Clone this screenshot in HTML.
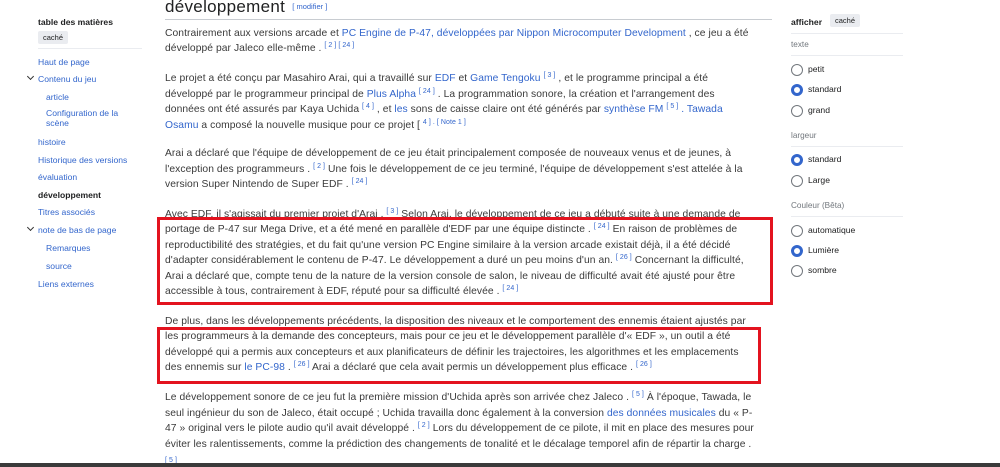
<!DOCTYPE html>
<html><head><meta charset="utf-8"><style>
*{margin:0;padding:0;box-sizing:border-box}
body{width:1000px;height:467px;overflow:hidden;background:#fff;font-family:"Liberation Sans","Noto Sans CJK JP",sans-serif;color:#202122;position:relative}
.l{position:absolute;left:165px;white-space:nowrap;font-size:10.3px;line-height:15px;color:#3a3a3a;letter-spacing:0.06px}
a{color:#3366cc;text-decoration:none}
sup{font-size:7px;color:#3366cc;vertical-align:4px;line-height:0}
.s{position:absolute;font-size:8.6px;line-height:12px;white-space:nowrap;color:#3366cc}
.b{font-weight:bold;color:#202122}
.badge{position:absolute;background:#eaecf0;color:#202122;font-size:7.5px;padding:2px 5px;border-radius:2px}
.r{position:absolute;left:791px;width:12px;height:12px;border:1px solid #72777d;border-radius:50%}
.r.on{border:3.5px solid #36c}
.rt{position:absolute;left:808px;font-size:8.6px;color:#202122;white-space:nowrap}
.g{position:absolute;left:791px;font-size:8.2px;color:#72777d}
.hr{position:absolute;left:791px;width:112px;height:1px;background:#eaecf0}
.box{position:absolute;border:3px solid #e3131f}
.chev{position:absolute;left:28px;width:5px;height:5px;border-right:1px solid #333;border-bottom:1px solid #333;transform:rotate(45deg)}
</style></head><body>

<div class="s b" style="left:38px;top:16px">table des matières</div>
<div class="badge" style="left:38px;top:31px">caché</div>
<div style="position:absolute;left:38px;top:48px;width:104px;height:1px;background:#eaecf0"></div>
<div class="s" style="left:38px;top:56px">Haut de page</div>
<div class="chev" style="top:74px"></div>
<div class="s" style="left:38px;top:73px">Contenu du jeu</div>
<div class="s" style="left:46px;top:91px">article</div>
<div class="s" style="left:46px;top:108px;line-height:10px">Configuration de la<br>scène</div>
<div class="s" style="left:38px;top:136px">histoire</div>
<div class="s" style="left:38px;top:154px">Historique des versions</div>
<div class="s" style="left:38px;top:171px">évaluation</div>
<div class="s b" style="left:38px;top:189px">développement</div>
<div class="s" style="left:38px;top:206px">Titres associés</div>
<div class="chev" style="top:225px"></div>
<div class="s" style="left:38px;top:224px">note de bas de page</div>
<div class="s" style="left:46px;top:242px">Remarques</div>
<div class="s" style="left:46px;top:260px">source</div>
<div class="s" style="left:38px;top:278px">Liens externes</div>

<div style="position:absolute;left:165px;top:-3px;font-size:17px;color:#202122;white-space:nowrap;letter-spacing:0.3px">développement <span style="font-size:7.5px;color:#3366cc;vertical-align:3px;letter-spacing:0">&nbsp;[ <a>modifier</a> ]</span></div>
<div style="position:absolute;left:165px;top:19px;width:607px;height:1px;background:#c8ccd1"></div>

<div class="l" style="top:26px">Contrairement aux versions arcade et <a>PC Engine de P-47, développées par Nippon Microcomputer Development</a> , ce jeu a été</div>
<div class="l" style="top:41px">développé par Jaleco elle-même . <sup>[ 2 ] [ 24 ]</sup></div>

<div class="l" style="top:71px">Le projet a été conçu par Masahiro Arai, qui a travaillé sur <a>EDF</a> et <a>Game Tengoku</a> <sup>[ 3 ]</sup> , et le programme principal a été</div>
<div class="l" style="top:87px">développé par le programmeur principal de <a>Plus Alpha</a> <sup>[ 24 ]</sup> . La programmation sonore, la création et l'arrangement des</div>
<div class="l" style="top:102px">données ont été assurés par Kaya Uchida <sup>[ 4 ]</sup> , et <a>les</a> sons de caisse claire ont été générés par <a>synthèse FM</a> <sup>[ 5 ]</sup> <a>. Tawada</a></div>
<div class="l" style="top:118px"><a>Osamu</a> a composé la nouvelle musique pour ce projet [ <sup>4 ] . [ Note 1 ]</sup></div>

<div class="l" style="top:146px">Arai a déclaré que l'équipe de développement de ce jeu était principalement composée de nouveaux venus et de jeunes, à</div>
<div class="l" style="top:162px">l'exception des programmeurs . <sup>[ 2 ]</sup> Une fois le développement de ce jeu terminé, l'équipe de développement s'est attelée à la</div>
<div class="l" style="top:177px">version Super Nintendo de Super EDF . <sup>[ 24 ]</sup></div>

<div class="l" style="top:207px">Avec EDF, il s'agissait du premier projet d'Arai . <sup>[ 3 ]</sup> Selon Arai, le développement de ce jeu a débuté suite à une demande de</div>
<div class="l" style="top:222px">portage de P-47 sur Mega Drive, et a été mené en parallèle d'EDF par une équipe distincte . <sup>[ 24 ]</sup> En raison de problèmes de</div>
<div class="l" style="top:238px">reproductibilité des stratégies, et du fait qu'une version PC Engine similaire à la version arcade existait déjà, il a été décidé</div>
<div class="l" style="top:253px">d'adapter considérablement le contenu de P-47. Le développement a duré un peu moins d'un an. <sup>[ 26 ]</sup> Concernant la difficulté,</div>
<div class="l" style="top:269px">Arai a déclaré que, compte tenu de la nature de la version console de salon, le niveau de difficulté avait été ajusté pour être</div>
<div class="l" style="top:284px">accessible à tous, contrairement à EDF, réputé pour sa difficulté élevée . <sup>[ 24 ]</sup></div>

<div class="l" style="top:314px">De plus, dans les développements précédents, la disposition des niveaux et le comportement des ennemis étaient ajustés par</div>
<div class="l" style="top:329px">les programmeurs à la demande des concepteurs, mais pour ce jeu et le développement parallèle d'« EDF », un outil a été</div>
<div class="l" style="top:345px">développé qui a permis aux concepteurs et aux planificateurs de définir les trajectoires, les algorithmes et les emplacements</div>
<div class="l" style="top:360px">des ennemis sur <a>le PC-98</a> . <sup>[ 26 ]</sup> Arai a déclaré que cela avait permis un développement plus efficace . <sup>[ 26 ]</sup></div>

<div class="l" style="top:390px">Le développement sonore de ce jeu fut la première mission d'Uchida après son arrivée chez Jaleco . <sup>[ 5 ]</sup> À l'époque, Tawada, le</div>
<div class="l" style="top:406px">seul ingénieur du son de Jaleco, était occupé ; Uchida travailla donc également à la conversion <a>des données musicales</a> du « P-</div>
<div class="l" style="top:421px">47 » original vers le pilote audio qu'il avait développé . <sup>[ 2 ]</sup> Lors du développement de ce pilote, il mit en place des mesures pour</div>
<div class="l" style="top:437px">éviter les ralentissements, comme la prédiction des changements de tonalité et le décalage temporel afin de répartir la charge .</div>
<div class="l" style="top:452px"><sup style="vertical-align:0">[ 5 ]</sup></div>

<div class="box" style="left:157px;top:217px;width:616px;height:88px"></div>
<div class="box" style="left:157px;top:327px;width:604px;height:57px"></div>

<div class="s b" style="left:791px;top:16px">afficher</div>
<div class="badge" style="left:830px;top:14px">caché</div>
<div class="hr" style="top:33px"></div>
<div class="g" style="top:40px">texte</div>
<div class="hr" style="top:55px"></div>
<div class="r" style="top:64px"></div><div class="rt" style="top:64px">petit</div>
<div class="r on" style="top:84px"></div><div class="rt" style="top:84px">standard</div>
<div class="r" style="top:105px"></div><div class="rt" style="top:105px">grand</div>
<div class="g" style="top:131px">largeur</div>
<div class="hr" style="top:146px"></div>
<div class="r on" style="top:154px"></div><div class="rt" style="top:154px">standard</div>
<div class="r" style="top:175px"></div><div class="rt" style="top:175px">Large</div>
<div class="g" style="top:201px">Couleur (Bêta)</div>
<div class="hr" style="top:216px"></div>
<div class="r" style="top:225px"></div><div class="rt" style="top:225px">automatique</div>
<div class="r on" style="top:245px"></div><div class="rt" style="top:245px">Lumière</div>
<div class="r" style="top:265px"></div><div class="rt" style="top:265px">sombre</div>

<div style="position:absolute;left:0;top:463px;width:1000px;height:4px;background:#3a3a3a"></div>
</body></html>
